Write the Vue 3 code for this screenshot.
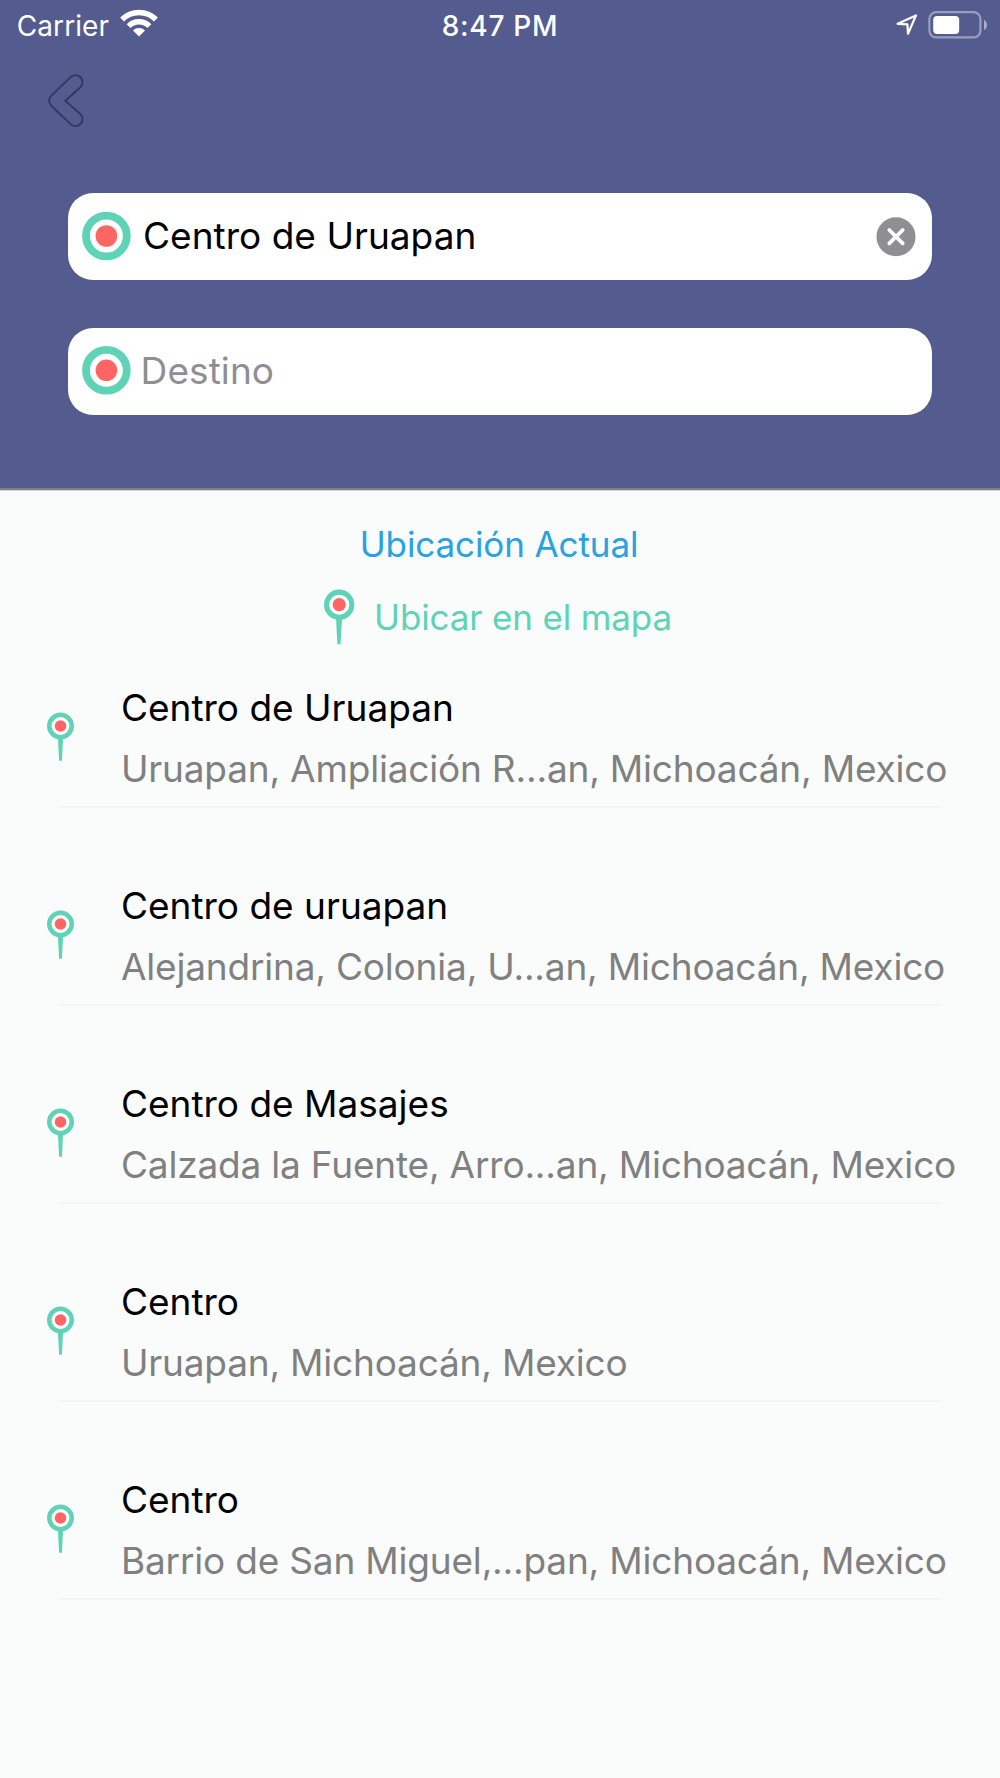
<script setup>
const places = [
  { name: 'Centro de Uruapan', address: 'Uruapan, Ampliación R...an, Michoacán, Mexico' },
  { name: 'Centro de uruapan', address: 'Alejandrina, Colonia, U...an, Michoacán, Mexico' },
  { name: 'Centro de Masajes', address: 'Calzada la Fuente, Arro...an, Michoacán, Mexico' },
  { name: 'Centro', address: 'Uruapan, Michoacán, Mexico' },
  { name: 'Centro', address: 'Barrio de San Miguel,...pan, Michoacán, Mexico' },
]
</script>

<template>
  <div class="screen">
    <header class="header">
      <div class="status">
        <div class="status-left">
          <span class="carrier">Carrier</span>
          <svg class="wifi" width="38" height="28" viewBox="0 0 38 28">
            <path d="M2.05 10.55A24 24 0 0 1 35.95 10.55" fill="none" stroke="#fff" stroke-width="5.6" />
            <path d="M8.6 17.1A14.7 14.7 0 0 1 29.4 17.1" fill="none" stroke="#fff" stroke-width="5.4" />
            <path d="M19 27.4L13 21.4A8.5 8.5 0 0 1 25 21.4Z" fill="#fff" />
          </svg>
        </div>
        <span class="time">8:47 PM</span>
        <div class="status-right">
          <svg width="24" height="24" viewBox="0 0 24 24">
            <path d="M2.6 11.8L21 3.4L13 21.7L12.4 12.4Z" fill="none" stroke="#fff" stroke-width="2.2" stroke-linejoin="round" />
          </svg>
          <svg class="battery" width="60" height="28" viewBox="0 0 60 28">
            <rect x="1.4" y="1.2" width="51" height="25.2" rx="6.8" fill="none" stroke="#fff" stroke-opacity=".42" stroke-width="2.2" />
            <rect x="5.2" y="5" width="26" height="18" rx="4" fill="#fff" />
            <path d="M56 9C60 10.8 60 17.2 56 19Z" fill="#fff" fill-opacity=".5" />
          </svg>
        </div>
      </div>

      <svg class="back" width="38" height="54" viewBox="0 0 38 54">
        <path d="M23.3 3.4L4 22.1Q0.2 26.6 4 31.5L23.3 49.9A6.8 6.8 0 0 0 33.6 40.3L18.3 26.7L33.6 13A6.8 6.8 0 0 0 23.3 3.4Z" fill="none" stroke="#35375e" stroke-width="1.9" stroke-linejoin="round" />
      </svg>

      <div class="fields">
        <div class="field">
          <svg class="target" width="50" height="50" viewBox="0 0 50 50">
            <circle cx="24.4" cy="25" r="20.4" fill="#fff" stroke="#5fd3b5" stroke-width="7.8" />
            <circle cx="24.4" cy="25" r="10.8" fill="#ff6663" />
          </svg>
          <span class="value">Centro de Uruapan</span>
          <svg class="clear" width="40" height="40" viewBox="0 0 40 40">
            <circle cx="20" cy="19.7" r="19.5" fill="#8e8e93" />
            <path d="M13.3 13L26.7 26.4M26.7 13L13.3 26.4" stroke="#fff" stroke-width="3.8" stroke-linecap="round" />
          </svg>
        </div>
        <div class="field">
          <svg class="target" width="50" height="50" viewBox="0 0 50 50">
            <circle cx="24.4" cy="24.3" r="20.4" fill="#fff" stroke="#5fd3b5" stroke-width="7.8" />
            <circle cx="24.4" cy="24.3" r="10.8" fill="#ff6663" />
          </svg>
          <span class="placeholder">Destino</span>
        </div>
      </div>
    </header>

    <main>
      <div class="link current">Ubicación Actual</div>
      <div class="link on-map">
        <svg class="pin-large" width="32" height="56" viewBox="0 0 32 56">
          <path d="M12 29H18L16.6 55.2H13.4Z" fill="#5fd3b5" />
          <circle cx="15.2" cy="15.7" r="12.6" fill="#fff" stroke="#5fd3b5" stroke-width="5.1" />
          <circle cx="15.2" cy="15.7" r="6.6" fill="#ff6663" />
        </svg>
        <span>Ubicar en el mapa</span>
      </div>

      <ul class="places">
        <li v-for="(place, i) in places" :key="i" class="place">
          <svg class="pin" width="28" height="50" viewBox="0 0 28 50">
            <path d="M10.9 25H16.1L14.9 48.7H12.1Z" fill="#5fd3b5" />
            <circle cx="13.5" cy="14" r="11.25" fill="#fff" stroke="#5fd3b5" stroke-width="4.5" />
            <circle cx="13.5" cy="14" r="5.8" fill="#ff6663" />
          </svg>
          <div class="texts">
            <div class="name">{{ place.name }}</div>
            <div class="address">{{ place.address }}</div>
          </div>
        </li>
      </ul>
    </main>
  </div>
</template>

<style>
body {
  background: #fafcfb;
}
</style>

<style scoped>
.screen {
  width: 1000px;
  height: 1778px;
  overflow: hidden;
  background: #fafcfb;
  font-family: Inter, "Liberation Sans", sans-serif;
  font-size: 37px;
  line-height: 44px;
  white-space: nowrap;
}
.header {
  box-sizing: border-box;
  height: 490px;
  background: #545b8f;
  border-bottom: 2px solid #808082;
  box-shadow: 0 1px 0 #d3d5d4;
}
.status {
  display: grid;
  grid-template-columns: 1fr auto 1fr;
  align-items: start;
  height: 75px;
  color: #fff;
  font-size: 28px;
}
.status-left {
  display: flex;
  padding: 3.6px 0 0 16.7px;
}
.carrier {
  letter-spacing: 0.1px;
}
.wifi {
  margin: 5.9px 0 0 11.3px;
}
.time {
  padding-top: 3.6px;
  font-weight: 550;
  letter-spacing: 0.75px;
}
.status-right {
  display: flex;
  justify-content: flex-end;
  padding: 10.8px 12px 0 0;
}
.status-right svg:first-child {
  margin-top: 1px;
}
.battery {
  margin-left: 9px;
}
.back {
  display: block;
  margin: -1px 0 0 47px;
}
.fields {
  display: flex;
  flex-direction: column;
  gap: 48.1px;
  padding: 65.4px 67.7px 0 68px;
}
.field {
  display: flex;
  align-items: center;
  box-sizing: border-box;
  height: 87px;
  padding: 0 16.3px 0 13.6px;
  border-radius: 25px;
  background: #fff;
}
.target {
  margin-top: -1px;
}
.value {
  flex: 1;
  margin: -1px 0 0 11.4px;
  color: #000;
  letter-spacing: 0.03px;
}
.placeholder {
  margin: -1px 0 0 9px;
  color: #8e8e93;
  letter-spacing: 0.09px;
}
.link {
  display: flex;
  justify-content: center;
  font-size: 35px;
}
.current {
  padding: 31.5px 2px 0 0;
  color: #29a2e1;
  letter-spacing: -0.1px;
}
.on-map {
  margin-top: 23px;
  padding-right: 4.4px;
  height: 56px;
  color: #5fd3b5;
  letter-spacing: -0.15px;
}
.on-map span {
  margin: 6px 0 0 18.4px;
}
.places {
  margin: 41.2px 0 0;
  padding: 0;
  list-style: none;
}
.place {
  position: relative;
  display: flex;
  height: 198.1px;
}
.place::after {
  content: "";
  position: absolute;
  left: 60px;
  right: 60px;
  top: 120.3px;
  height: 2px;
  background: #f3f5f4;
}
.pin {
  margin: 26.4px 0 0 46.6px;
}
.texts {
  margin-left: 46.4px;
}
.name {
  color: #000;
}
.address {
  margin-top: 17px;
  color: #808080;
  letter-spacing: -0.19px;
}
</style>
